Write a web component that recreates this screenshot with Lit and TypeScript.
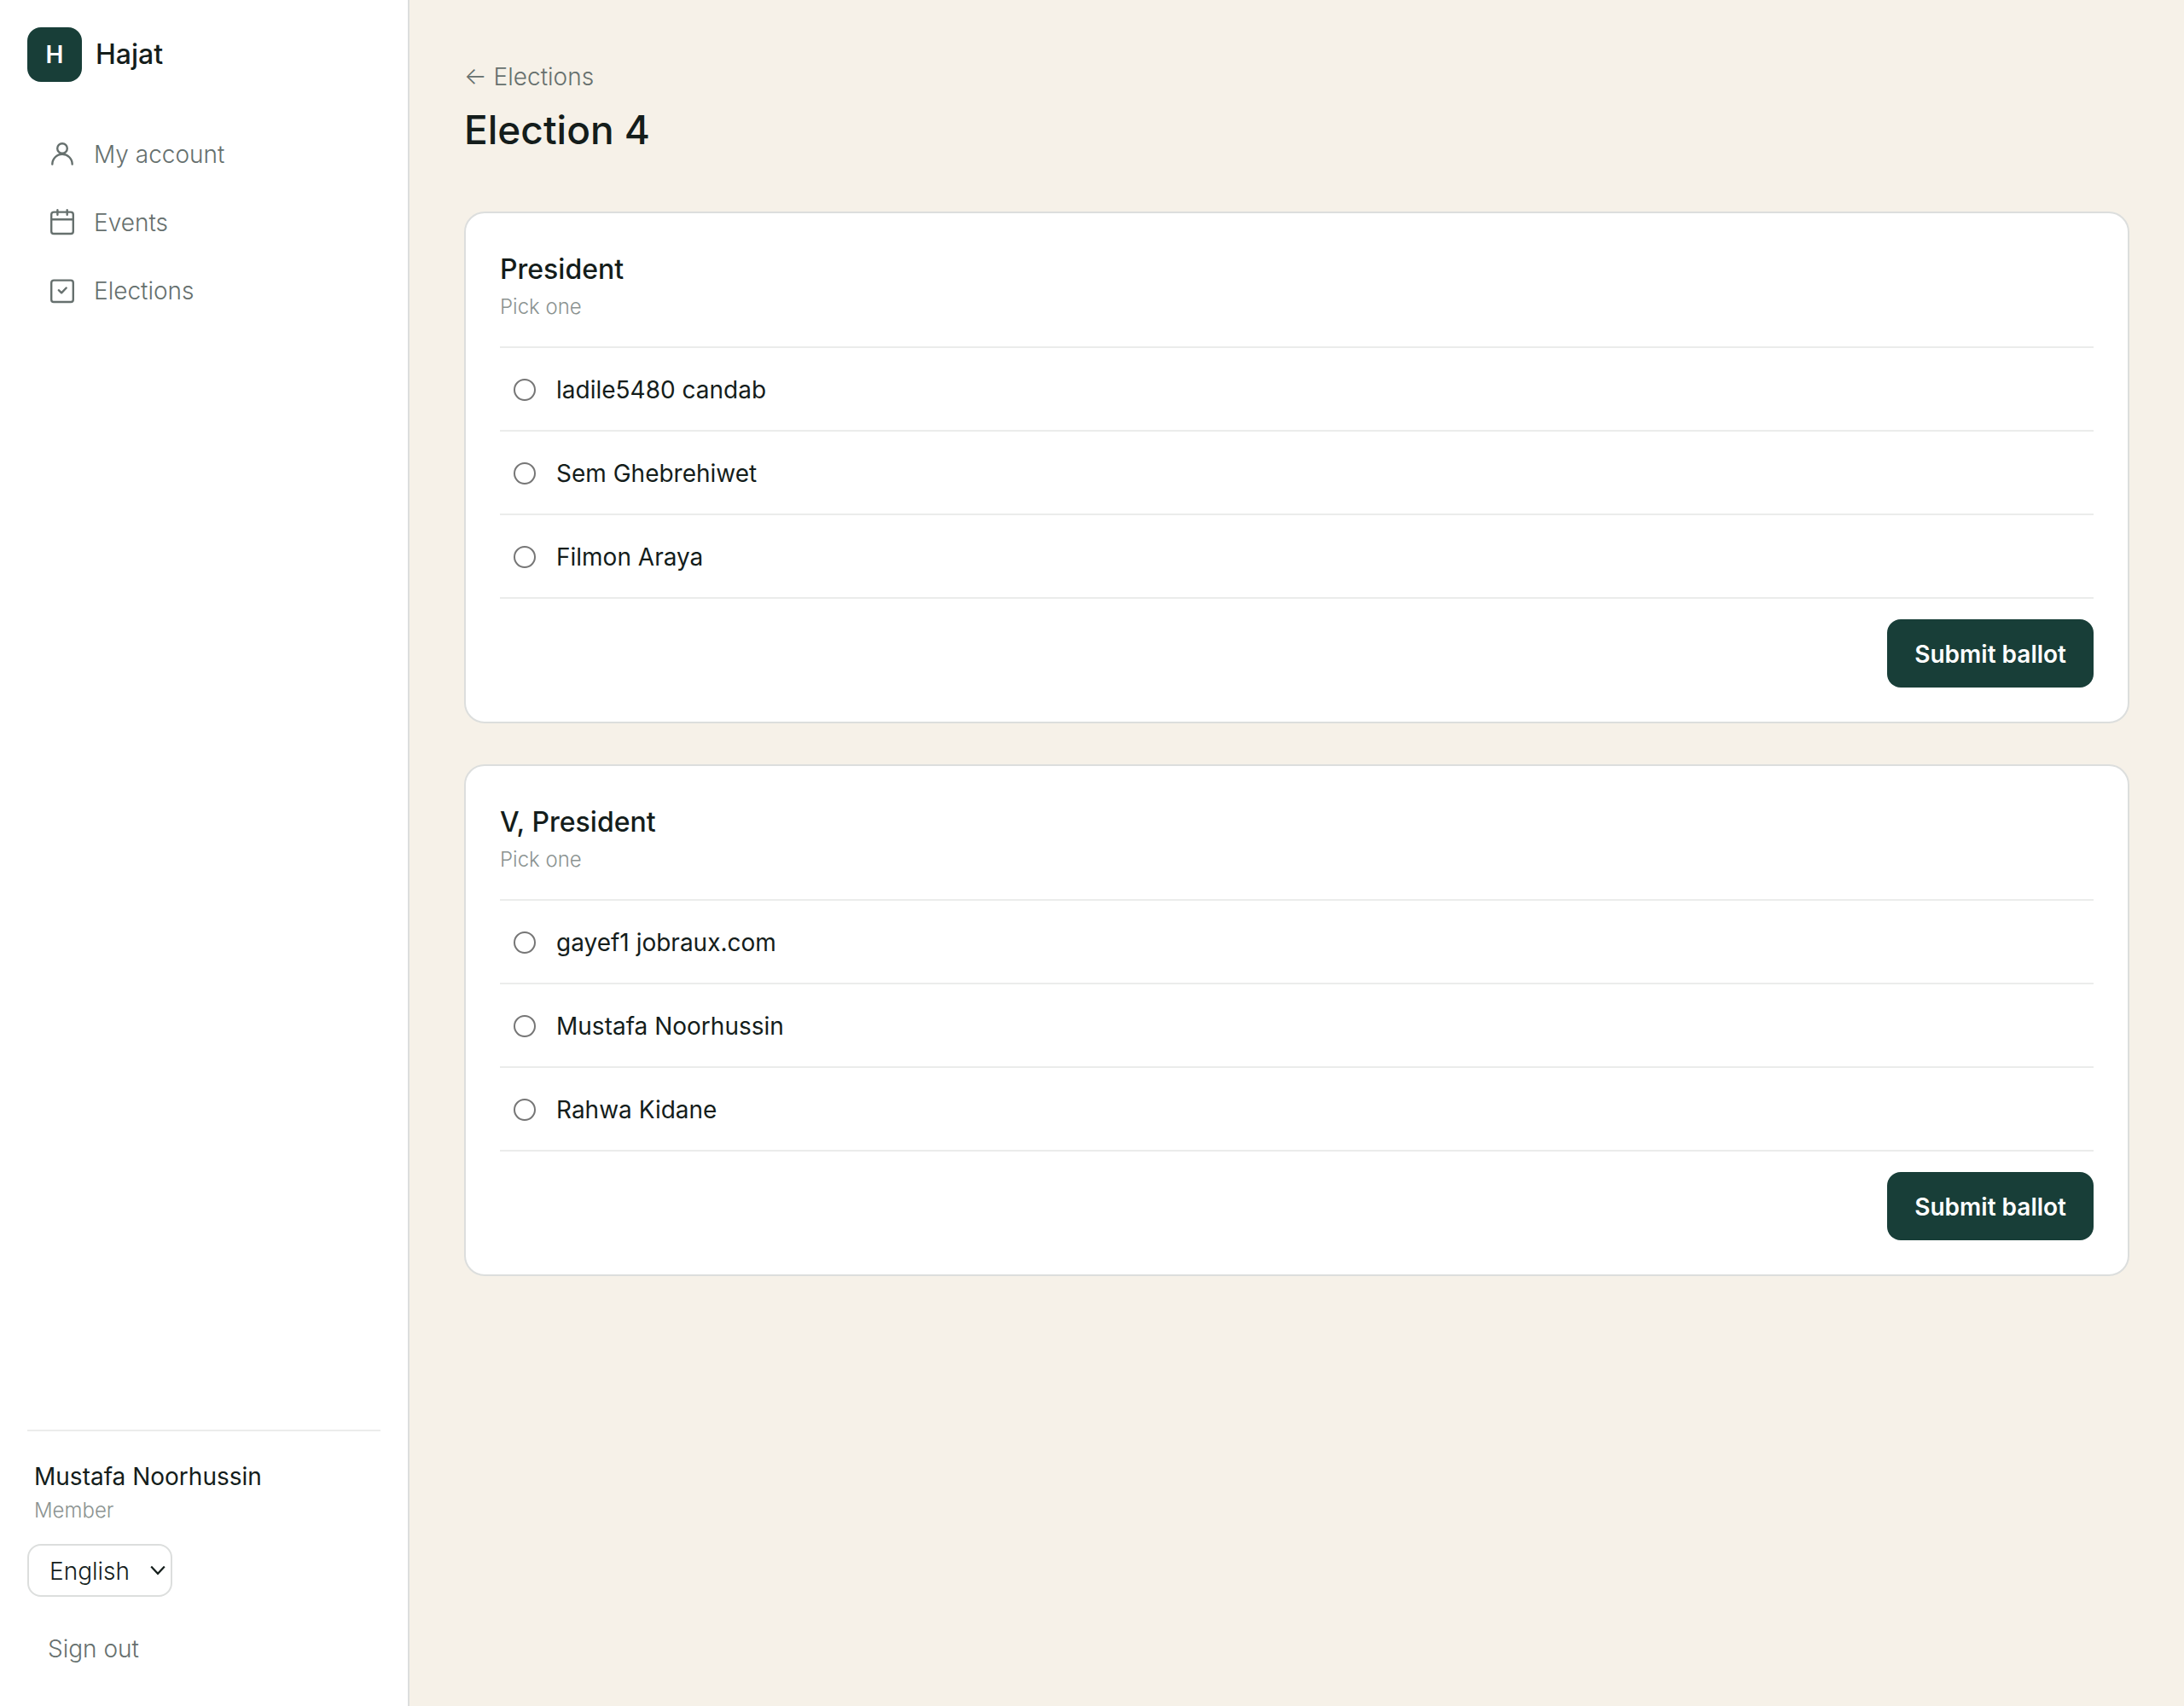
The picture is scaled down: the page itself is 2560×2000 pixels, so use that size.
import { LitElement, html, css, svg } from "lit";
import { customElement, property } from "lit/decorators.js";

type IconName = "user" | "calendar" | "ballot";

interface NavItem {
  label: string;
  icon: IconName;
}

interface Position {
  id: string;
  title: string;
  hint: string;
  candidates: string[];
}

const NAV: NavItem[] = [
  { label: "My account", icon: "user" },
  { label: "Events", icon: "calendar" },
  { label: "Elections", icon: "ballot" },
];

const POSITIONS: Position[] = [
  {
    id: "president",
    title: "President",
    hint: "Pick one",
    candidates: ["ladile5480 candab", "Sem Ghebrehiwet", "Filmon Araya"],
  },
  {
    id: "vice-president",
    title: "V, President",
    hint: "Pick one",
    candidates: ["gayef1 jobraux.com", "Mustafa Noorhussin", "Rahwa Kidane"],
  },
];

const ICONS = {
  user: svg`<circle cx="17" cy="10" r="5.8"/><path d="M5.3 28.6c0-6.6 5.2-11.8 11.7-11.8s11.7 5.2 11.7 11.8"/>`,
  calendar: svg`<rect x="4.2" y="4.6" width="25.6" height="25.4" rx="2.8"/><path d="M4.2 13.3h25.6M11.4 2.2v5.6M22.7 2.2v5.6"/>`,
  ballot: svg`<rect x="4.2" y="4.6" width="25.6" height="25.4" rx="2.8"/><path d="M12.8 16.2l3.3 3.1 5.6-5.8"/>`,
};

@customElement("ballot-card")
export class BallotCard extends LitElement {
  @property({ attribute: false }) position!: Position;

  static styles = css`
    :host {
      display: block;
    }
    .card {
      background: #ffffff;
      border: 2px solid #dcdedd;
      border-radius: 24px;
      padding: 42px 40px 40px;
    }
    .title {
      margin: 0;
      font-size: 32px;
      line-height: 48px;
      font-weight: 500;
    }
    .hint {
      margin: 0 0 26px;
      font-size: 24px;
      line-height: 40px;
      font-weight: 300;
      color: #8b9391;
    }
    .options {
      margin: 0;
      padding: 0;
      border: 0;
      border-top: 2px solid #ebeceb;
    }
    .option {
      display: flex;
      align-items: center;
      gap: 24px;
      min-height: 94px;
      padding: 2px 16px 0;
      border-bottom: 2px solid #ebeceb;
      cursor: pointer;
    }
    .radio {
      appearance: none;
      flex: none;
      box-sizing: border-box;
      width: 26px;
      height: 26px;
      margin: 0;
      border: 2px solid #767676;
      border-radius: 50%;
      background: #ffffff;
    }
    .radio:checked {
      border-color: #183e38;
      background: radial-gradient(#183e38 50%, #ffffff 55%);
    }
    .actions {
      display: flex;
      justify-content: flex-end;
      margin-top: 24px;
    }
    .submit {
      border: 0;
      border-radius: 16px;
      padding: 21px 32px 19px;
      background: #183e38;
      color: #ffffff;
      font: inherit;
      font-weight: 600;
      line-height: 40px;
      cursor: pointer;
    }
  `;

  render() {
    const { id, title, hint, candidates } = this.position;
    return html`
      <form class="card" @submit=${(e: Event) => e.preventDefault()}>
        <h2 class="title" id="title">${title}</h2>
        <p class="hint">${hint}</p>
        <fieldset class="options" aria-labelledby="title">
          ${candidates.map(
            (name, i) => html`
              <label class="option" for="${id}-${i}">
                <input class="radio" type="radio" id="${id}-${i}" name=${id} .value=${name} />
                <span>${name}</span>
              </label>
            `
          )}
        </fieldset>
        <div class="actions">
          <button class="submit" type="submit">Submit ballot</button>
        </div>
      </form>
    `;
  }
}

@customElement("app-sidebar")
export class AppSidebar extends LitElement {
  static styles = css`
    :host {
      display: flex;
      flex-direction: column;
      box-sizing: border-box;
      padding: 32px;
      background: #ffffff;
      border-right: 2px solid #dcdedd;
    }
    .brand {
      display: flex;
      align-items: center;
      gap: 16px;
      font-size: 32px;
      line-height: 48px;
      font-weight: 500;
    }
    .mark {
      display: grid;
      place-items: center;
      width: 64px;
      height: 64px;
      border-radius: 16px;
      background: #183e38;
      color: #ffffff;
      font-size: 28px;
      font-weight: 600;
    }
    .nav {
      display: flex;
      flex-direction: column;
      gap: 4px;
      margin-top: 47px;
    }
    .link {
      display: flex;
      align-items: center;
      gap: 20px;
      padding: 18px 24px;
      color: #66706e;
      font-weight: 300;
      text-decoration: none;
    }
    .icon {
      flex: none;
      width: 34px;
      height: 34px;
      fill: none;
      stroke: currentColor;
      stroke-width: 2.4;
      stroke-linecap: round;
      stroke-linejoin: round;
    }
    .account {
      display: flex;
      flex-direction: column;
      align-items: flex-start;
      margin-top: auto;
      border-top: 2px solid #ebeceb;
    }
    .name {
      margin: 31px 8px 0;
      line-height: 44px;
    }
    .role {
      margin: 0 8px;
      color: #8b9391;
      font-size: 24px;
      line-height: 36px;
      font-weight: 300;
    }
    .language {
      display: grid;
      align-items: center;
      margin-top: 21px;
    }
    .select {
      grid-area: 1 / 1;
      appearance: none;
      box-sizing: border-box;
      width: 170px;
      height: 62px;
      padding: 2px 40px 0 24px;
      border: 2px solid #dcdedd;
      border-radius: 16px;
      background: #ffffff;
      color: inherit;
      font: inherit;
      font-weight: 300;
    }
    .chevron {
      grid-area: 1 / 1;
      justify-self: end;
      width: 18px;
      height: 12px;
      margin-right: 8px;
      fill: none;
      stroke: #141d1b;
      stroke-width: 2.2;
      pointer-events: none;
    }
    .signout {
      margin-top: 24px;
      padding: 17px 24px 15px;
      border: 0;
      background: none;
      color: #66706e;
      font: inherit;
      font-weight: 300;
      line-height: 40px;
      cursor: pointer;
    }
  `;

  render() {
    return html`
      <div class="brand"><span class="mark">H</span><span>Hajat</span></div>
      <nav class="nav">
        ${NAV.map(
          (item) => html`
            <a class="link" href="#">
              <svg class="icon" viewBox="0 0 34 34" aria-hidden="true">${ICONS[item.icon]}</svg>
              <span>${item.label}</span>
            </a>
          `
        )}
      </nav>
      <div class="account">
        <p class="name">Mustafa Noorhussin</p>
        <p class="role">Member</p>
        <div class="language">
          <select class="select" aria-label="Language">
            <option>English</option>
          </select>
          <svg class="chevron" viewBox="0 0 18 12" aria-hidden="true"><path d="M1.2 1.6L9 9.8l7.8-8.2" /></svg>
        </div>
        <button class="signout" type="button">Sign out</button>
      </div>
    `;
  }
}

@customElement("app-root")
export class AppRoot extends LitElement {
  static styles = css`
    :host {
      display: grid;
      grid-template-columns: 480px minmax(0, 1fr);
      min-height: 100vh;
      background: #f6f1e8;
      color: #141d1b;
      font-family: Inter, "Open Sans", sans-serif;
      font-size: 28px;
      line-height: 40px;
      font-weight: 400;
    }
    .main {
      padding: 64px;
    }
    .back {
      display: block;
      width: max-content;
      padding: 6px 0;
      color: #66706e;
      font-weight: 300;
      text-decoration: none;
    }
    .heading {
      margin: 4px 0 64px;
      font-size: 46px;
      line-height: 64px;
      font-weight: 500;
    }
    .cards {
      display: grid;
      gap: 48px;
    }
  `;

  render() {
    return html`
      <app-sidebar></app-sidebar>
      <main class="main">
        <a class="back" href="#">← Elections</a>
        <h1 class="heading">Election 4</h1>
        <div class="cards">
          ${POSITIONS.map((p) => html`<ballot-card .position=${p}></ballot-card>`)}
        </div>
      </main>
    `;
  }
}
